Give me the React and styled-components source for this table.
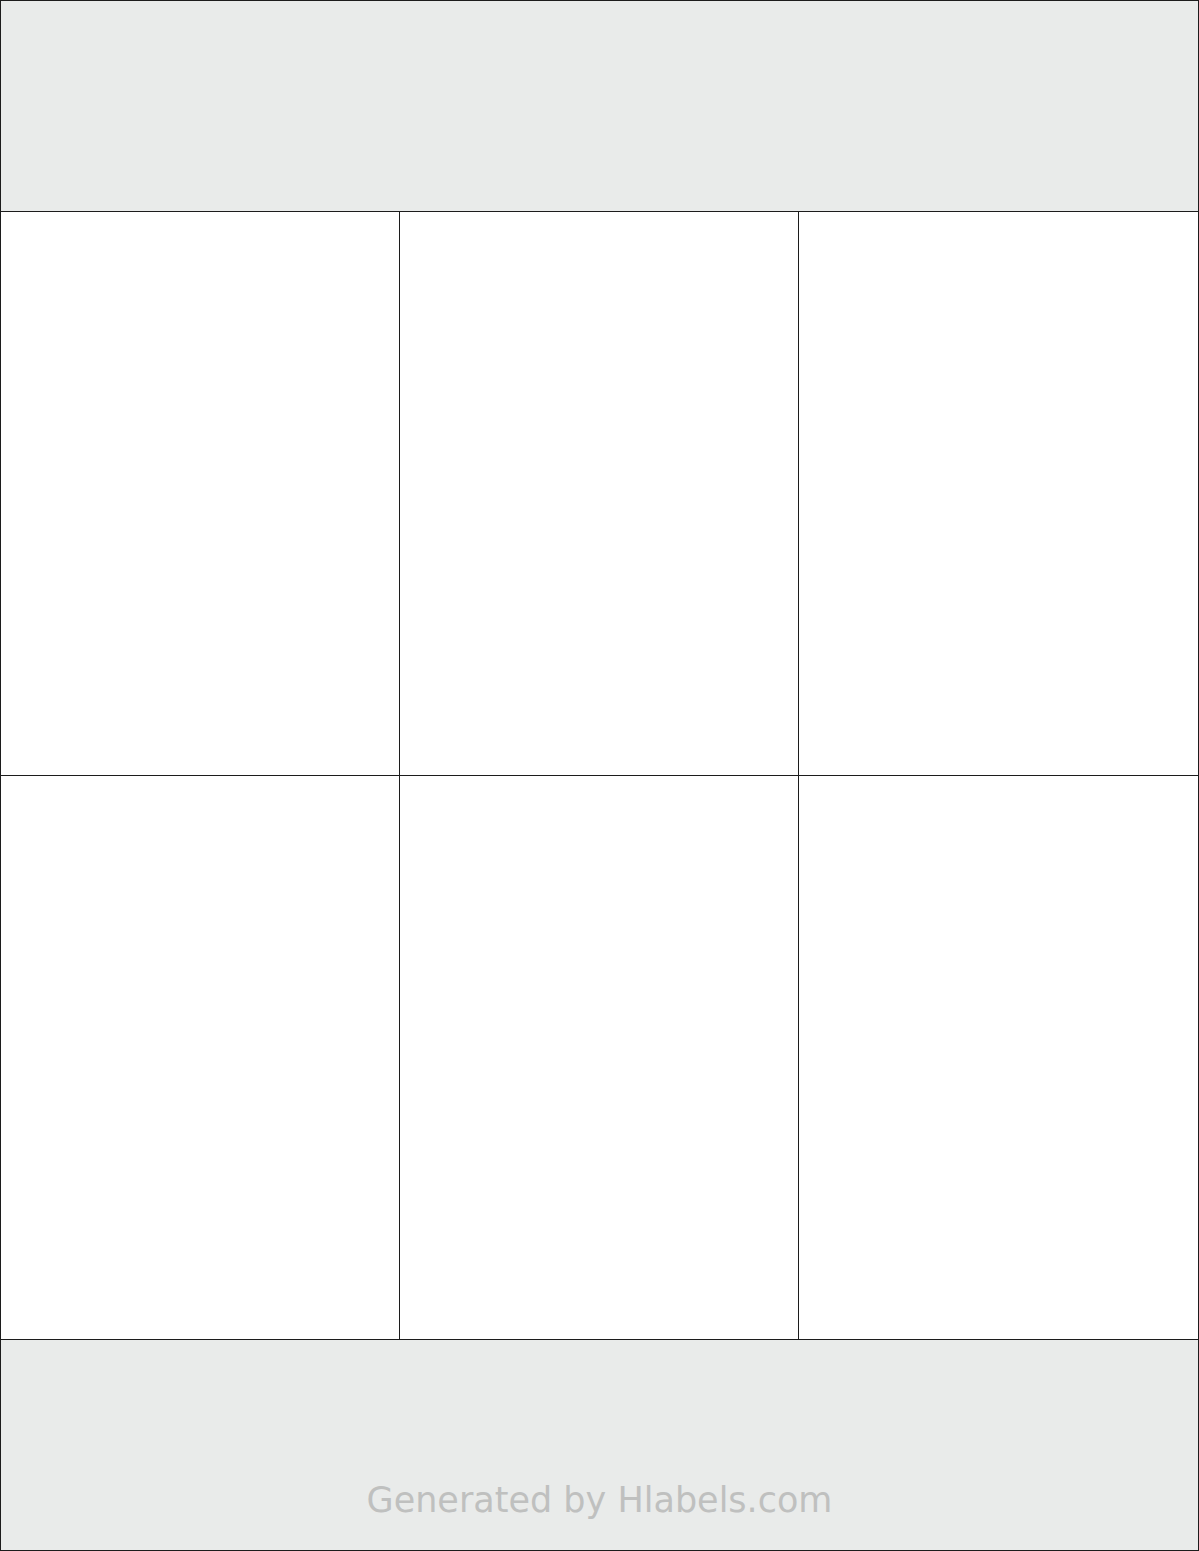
import React from 'react'
import styled, { createGlobalStyle } from 'styled-components'

const GlobalStyle = createGlobalStyle`
  html, body {
    margin: 0;
    padding: 0;
    background: #ffffff;
  }
`

const Sheet = styled.div`
  width: 1199px;
  height: 1551px;
  box-sizing: border-box;
  border: 1px solid #1c1c1c;
  background: #1c1c1c;
  display: grid;
  grid-template-columns: 398px 398px 399px;
  grid-template-rows: 210px 563px 563px 210px;
  gap: 1px;
`

const Band = styled.div`
  grid-column: 1 / -1;
  background: #e9ebea;
  display: flex;
  align-items: flex-end;
  justify-content: center;
  padding-bottom: ${p => (p.footer ? '32px' : '0')};
`

const Label = styled.div`
  background: #ffffff;
`

const Credit = styled.span`
  font-family: "DejaVu Sans", Verdana, sans-serif;
  font-size: 35px;
  line-height: 1;
  color: #bfc0bf;
`

export default function App() {
  const labels = [1, 2, 3, 4, 5, 6]
  return (
    <>
      <GlobalStyle />
      <Sheet>
        <Band />
        {labels.map(n => (
          <Label key={n} />
        ))}
        <Band footer>
          <Credit>Generated by Hlabels.com</Credit>
        </Band>
      </Sheet>
    </>
  )
}
